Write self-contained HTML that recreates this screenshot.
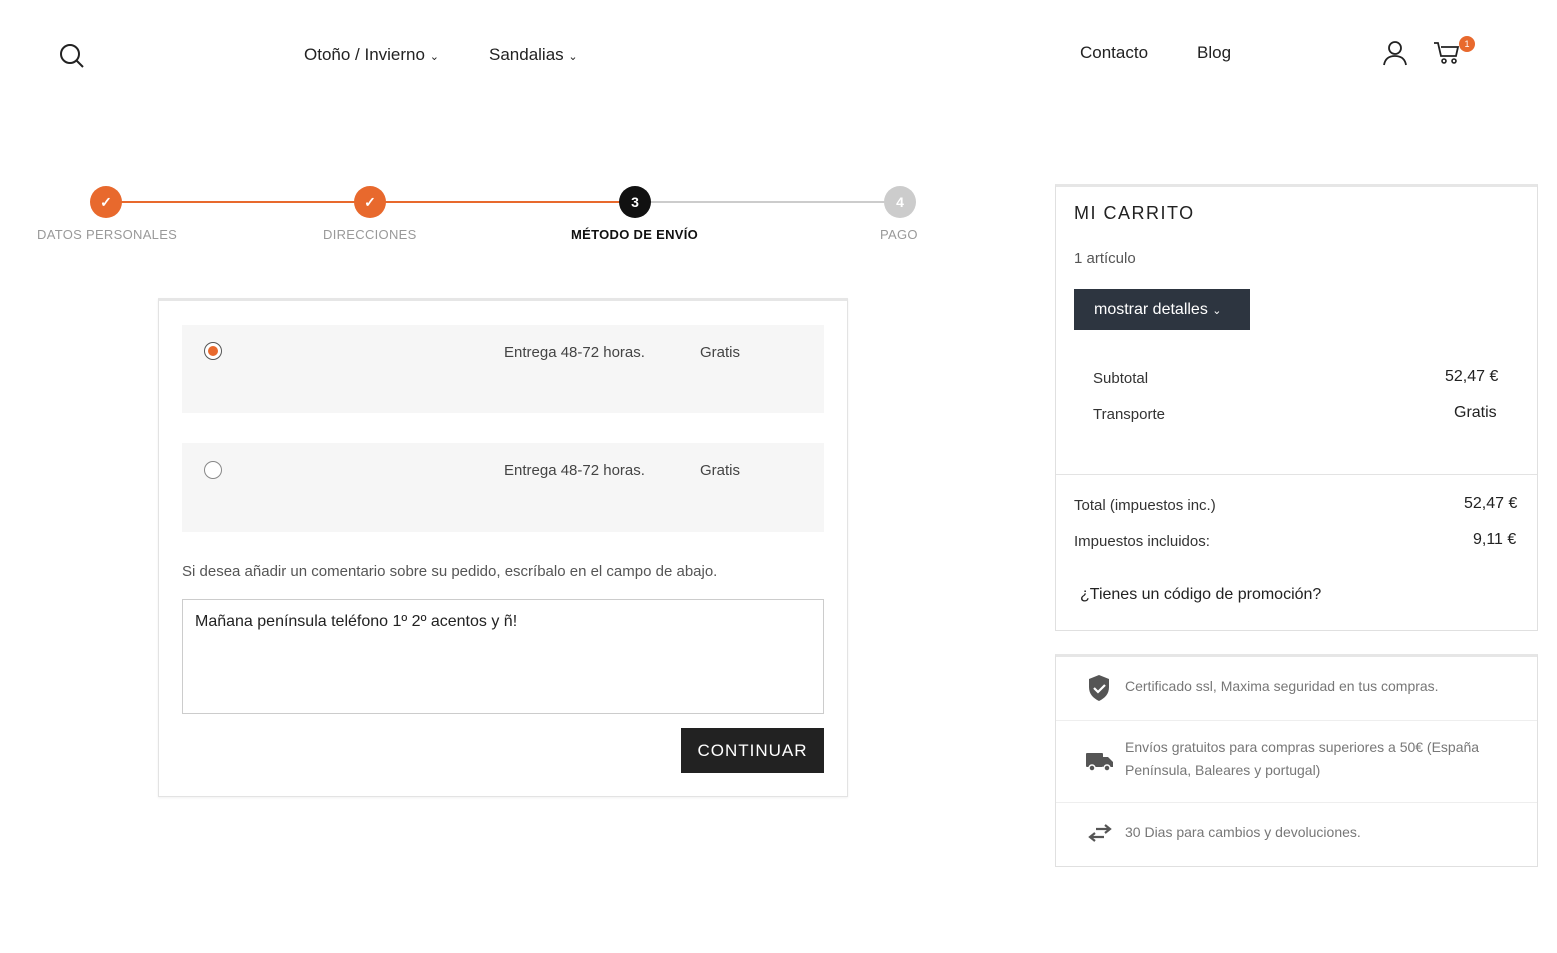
<!DOCTYPE html>
<html><head><meta charset="utf-8">
<style>
*{box-sizing:border-box;margin:0;padding:0}
body{width:1557px;height:953px;background:#fff;font-family:"Liberation Sans",sans-serif;color:#222;position:relative;overflow:hidden}
.a{position:absolute}
.nav{font-size:17px;color:#222}
.step{position:absolute;width:32px;height:32px;border-radius:50%;top:186px;color:#fff;font-size:14px;font-weight:bold;text-align:center;line-height:32px}
.lbl{position:absolute;top:227px;font-size:13px;color:#999;letter-spacing:.3px;white-space:nowrap}
.opt{position:absolute;left:182px;width:642px;background:#f6f6f6}
.radio{position:absolute;left:22px;width:18px;height:18px;border-radius:50%;border:1px solid #888;background:#fff}
.t15{font-size:15px;color:#444}
.feat{font-size:14px;color:#777;line-height:23px}
</style></head><body>
<!-- header -->
<svg class="a" style="left:58px;top:42px" width="28" height="28" viewBox="0 0 28 28"><circle cx="12" cy="12" r="9" fill="none" stroke="#222" stroke-width="2"/><line x1="18.5" y1="18.5" x2="25" y2="25" stroke="#222" stroke-width="2"/></svg>
<div class="a nav" style="left:304px;top:45px">Otoño / Invierno <span style="font-size:11px">⌄</span></div>
<div class="a nav" style="left:489px;top:45px">Sandalias <span style="font-size:11px">⌄</span></div>
<div class="a nav" style="left:1080px;top:43px">Contacto</div>
<div class="a nav" style="left:1197px;top:43px">Blog</div>
<svg class="a" style="left:1382px;top:39px" width="26" height="28" viewBox="0 0 26 28"><circle cx="13" cy="9" r="6" fill="none" stroke="#222" stroke-width="1.8"/><path d="M2 26c1-6 5-9 11-9s10 3 11 9" fill="none" stroke="#222" stroke-width="1.8"/></svg>
<svg class="a" style="left:1433px;top:40px" width="30" height="26" viewBox="0 0 30 26"><path d="M1 3h4l3 13h15l2-9H8" fill="none" stroke="#222" stroke-width="1.8"/><circle cx="11" cy="21" r="2" fill="none" stroke="#222" stroke-width="1.6"/><circle cx="21" cy="21" r="2" fill="none" stroke="#222" stroke-width="1.6"/></svg>
<div class="a" style="left:1459px;top:36px;width:16px;height:16px;border-radius:50%;background:#e8692d;color:#fff;font-size:9px;text-align:center;line-height:16px">1</div>
<!-- steps -->
<div class="a" style="left:106px;top:201px;width:528px;height:2px;background:#e8692d"></div>
<div class="a" style="left:634px;top:201px;width:266px;height:2px;background:#ccc"></div>
<div class="step" style="left:90px;background:#e8692d">✓</div>
<div class="step" style="left:354px;background:#e8692d">✓</div>
<div class="step" style="left:619px;background:#111">3</div>
<div class="step" style="left:884px;background:#ccc">4</div>
<div class="lbl" style="left:37px">DATOS PERSONALES</div>
<div class="lbl" style="left:323px">DIRECCIONES</div>
<div class="lbl" style="left:571px;color:#111;font-weight:bold">MÉTODO DE ENVÍO</div>
<div class="lbl" style="left:880px">PAGO</div>
<!-- main box -->
<div class="a" style="left:158px;top:298px;width:690px;height:499px;border:1px solid #e3e3e3;border-top:3px solid #e6e6e6;box-shadow:0 1px 2px rgba(0,0,0,.06)"></div>
<div class="opt" style="top:325px;height:88px"><div class="radio" style="top:17px;border-color:#555"><div style="margin:3px;width:10px;height:10px;border-radius:50%;background:#e8692d"></div></div>
<div class="a t15" style="left:322px;top:19px">Entrega 48-72 horas.</div><div class="a t15" style="left:518px;top:19px">Gratis</div></div>
<div class="opt" style="top:443px;height:89px"><div class="radio" style="top:18px"></div>
<div class="a t15" style="left:322px;top:19px">Entrega 48-72 horas.</div><div class="a t15" style="left:518px;top:19px">Gratis</div></div>
<div class="a t15" style="left:182px;top:563px;color:#555">Si desea añadir un comentario sobre su pedido, escríbalo en el campo de abajo.</div>
<div class="a" style="left:182px;top:599px;width:642px;height:115px;border:1px solid #ccc"></div>
<div class="a" style="left:195px;top:613px;font-size:16px;color:#222">Mañana península teléfono 1º 2º acentos y ñ!</div>
<div class="a" style="left:681px;top:728px;width:143px;height:45px;background:#222;color:#fff;font-size:17px;letter-spacing:1px;text-align:center;line-height:45px">CONTINUAR</div>
<!-- cart -->
<div class="a" style="left:1055px;top:184px;width:483px;height:447px;border:1px solid #e0e0e0;border-top:3px solid #e6e6e6"></div>
<div class="a" style="left:1074px;top:203px;font-size:18px;letter-spacing:1.5px;color:#222">MI CARRITO</div>
<div class="a t15" style="left:1074px;top:250px;color:#555">1 artículo</div>
<div class="a" style="left:1074px;top:289px;width:176px;height:41px;background:#2d3540;color:#fff;font-size:16px;line-height:41px;padding-left:20px">mostrar detalles <span style="font-size:11px">⌄</span></div>
<div class="a t15" style="left:1093px;top:370px;color:#333">Subtotal</div><div class="a" style="left:1445px;top:368px;font-size:16px;color:#222">52,47 €</div>
<div class="a t15" style="left:1093px;top:406px;color:#333">Transporte</div><div class="a" style="left:1454px;top:404px;font-size:16px;color:#222">Gratis</div>
<div class="a" style="left:1056px;top:474px;width:481px;height:1px;background:#e3e3e3"></div>
<div class="a t15" style="left:1074px;top:497px;color:#333">Total (impuestos inc.)</div><div class="a" style="left:1464px;top:495px;font-size:16px;color:#222">52,47 €</div>
<div class="a t15" style="left:1074px;top:533px;color:#333">Impuestos incluidos:</div><div class="a" style="left:1473px;top:531px;font-size:16px;color:#222">9,11 €</div>
<div class="a" style="left:1080px;top:586px;font-size:16px;color:#222">¿Tienes un código de promoción?</div>
<!-- features -->
<div class="a" style="left:1055px;top:654px;width:483px;height:213px;border:1px solid #e0e0e0;border-top:3px solid #e6e6e6"></div>
<div class="a" style="left:1056px;top:720px;width:481px;height:1px;background:#eee"></div>
<div class="a" style="left:1056px;top:802px;width:481px;height:1px;background:#eee"></div>
<svg class="a" style="left:1087px;top:674px" width="24" height="28" viewBox="0 0 24 28"><path d="M12 1L2 5v8c0 7 4 11 10 14 6-3 10-7 10-14V5z" fill="#555"/><path d="M7 14l4 4 7-7" fill="none" stroke="#fff" stroke-width="2.2"/></svg>
<div class="a feat" style="left:1125px;top:675px">Certificado ssl, Maxima seguridad en tus compras.</div>
<svg class="a" style="left:1086px;top:751px" width="28" height="22" viewBox="0 0 28 22"><rect x="0" y="2" width="17" height="14" rx="1" fill="#555"/><path d="M17 6h5l5 5v5H17z" fill="#555"/><circle cx="6" cy="17" r="3" fill="#555" stroke="#fff" stroke-width="1.5"/><circle cx="21" cy="17" r="3" fill="#555" stroke="#fff" stroke-width="1.5"/></svg>
<div class="a feat" style="left:1125px;top:736px">Envíos gratuitos para compras superiores a 50€ (España<br>Península, Baleares y portugal)</div>
<svg class="a" style="left:1088px;top:824px" width="24" height="18" viewBox="0 0 24 18"><path d="M8 5h13M17 1l5 4-5 4" fill="none" stroke="#555" stroke-width="2.2"/><path d="M16 13H3M7 9l-5 4 5 4" fill="none" stroke="#555" stroke-width="2.2"/></svg>
<div class="a feat" style="left:1125px;top:821px">30 Dias para cambios y devoluciones.</div>
</body></html>
